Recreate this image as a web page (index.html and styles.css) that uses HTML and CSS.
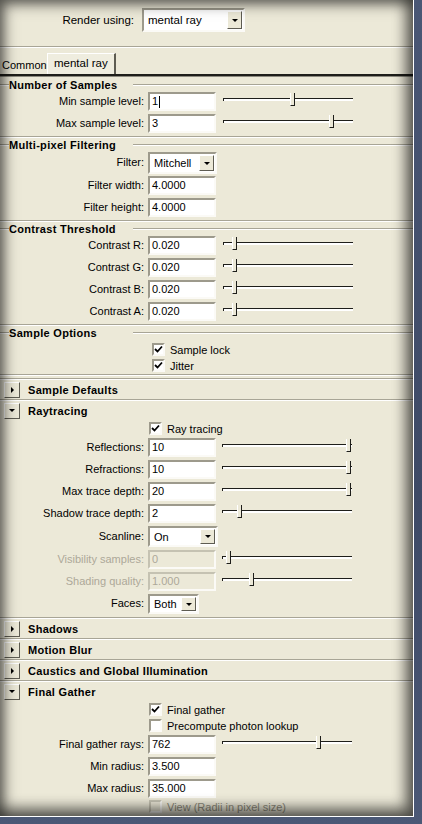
FILE: index.html
```html
<!DOCTYPE html>
<html>
<head>
<meta charset="utf-8">
<link rel="stylesheet" href="styles.css">
</head>
<body>
<div class="panel">
  <div class="top">
    <span class="top-lbl">Render using:</span>
    <div class="dd dd-render"><span class="val">mental ray</span><span class="btn"><i class="tri-d"></i></span></div>
  </div>
  <div class="hr"></div>
  <div class="tabs">
    <span class="tab">Common</span>
    <span class="tab active">mental ray</span>
  </div>
  <div class="tab-line"></div>

  <div class="frame first">
    <div class="ftitle"><span class="stub"></span><span class="ft">Number of Samples</span><span class="fline"></span></div>
    <div class="rows">
      <div class="row"><span class="lbl">Min sample level:</span><span class="field">1<i class="caret"></i></span><span class="slider"><span class="groove"></span><span class="thumb" style="left:67px"></span></span></div>
      <div class="row"><span class="lbl">Max sample level:</span><span class="field">3</span><span class="slider"><span class="groove"></span><span class="thumb" style="left:106px"></span></span></div>
    </div>
  </div>
  <div class="etched"></div>

  <div class="frame">
    <div class="ftitle"><span class="stub"></span><span class="ft">Multi-pixel Filtering</span><span class="fline"></span></div>
    <div class="rows">
      <div class="row row-dd"><span class="lbl">Filter:</span><div class="dd dd-filter"><span class="val">Mitchell</span><span class="btn"><i class="tri-d"></i></span></div></div>
      <div class="row"><span class="lbl">Filter width:</span><span class="field">4.0000</span></div>
      <div class="row"><span class="lbl">Filter height:</span><span class="field">4.0000</span></div>
    </div>
  </div>
  <div class="etched"></div>

  <div class="frame">
    <div class="ftitle"><span class="stub"></span><span class="ft">Contrast Threshold</span><span class="fline"></span></div>
    <div class="rows">
      <div class="row"><span class="lbl">Contrast R:</span><span class="field">0.020</span><span class="slider"><span class="groove"></span><span class="thumb" style="left:9px"></span></span></div>
      <div class="row"><span class="lbl">Contrast G:</span><span class="field">0.020</span><span class="slider"><span class="groove"></span><span class="thumb" style="left:9px"></span></span></div>
      <div class="row"><span class="lbl">Contrast B:</span><span class="field">0.020</span><span class="slider"><span class="groove"></span><span class="thumb" style="left:9px"></span></span></div>
      <div class="row"><span class="lbl">Contrast A:</span><span class="field">0.020</span><span class="slider"><span class="groove"></span><span class="thumb" style="left:9px"></span></span></div>
    </div>
  </div>
  <div class="etched"></div>

  <div class="frame chk-frame">
    <div class="ftitle"><span class="stub"></span><span class="ft">Sample Options</span><span class="fline"></span></div>
    <div class="chks">
      <div class="chk-row f"><span class="cb"><svg viewBox="0 0 9 9" width="9" height="9"><path d="M1 4 L3.5 6.5 L8 1.5" fill="none" stroke="#000" stroke-width="1.8"/></svg></span><span>Sample lock</span></div>
      <div class="chk-row f"><span class="cb"><svg viewBox="0 0 9 9" width="9" height="9"><path d="M1 4 L3.5 6.5 L8 1.5" fill="none" stroke="#000" stroke-width="1.8"/></svg></span><span>Jitter</span></div>
    </div>
  </div>
  <div class="etched"></div>

  <div class="section sd">
    <div class="etched"></div>
    <div class="sec-head"><span class="tri-btn"><i class="tri-r"></i></span><span class="sec-title">Sample Defaults</span></div>
  </div>

  <div class="section">
    <div class="etched"></div>
    <div class="sec-head"><span class="tri-btn"><i class="tri-d"></i></span><span class="sec-title">Raytracing</span></div>
    <div class="sec-body">
      <div class="chk-row"><span class="cb"><svg viewBox="0 0 9 9" width="9" height="9"><path d="M1 4 L3.5 6.5 L8 1.5" fill="none" stroke="#000" stroke-width="1.8"/></svg></span><span>Ray tracing</span></div>
      <div class="rows mt2">
        <div class="row"><span class="lbl">Reflections:</span><span class="field">10</span><span class="slider s2"><span class="groove"></span><span class="thumb" style="left:124px"></span></span></div>
        <div class="row"><span class="lbl">Refractions:</span><span class="field">10</span><span class="slider s2"><span class="groove"></span><span class="thumb" style="left:124px"></span></span></div>
        <div class="row"><span class="lbl">Max trace depth:</span><span class="field">20</span><span class="slider s2"><span class="groove"></span><span class="thumb" style="left:124px"></span></span></div>
        <div class="row"><span class="lbl">Shadow trace depth:</span><span class="field">2</span><span class="slider s2"><span class="groove"></span><span class="thumb" style="left:15px"></span></span></div>
        <div class="row row-dd"><span class="lbl">Scanline:</span><div class="dd dd-scan"><span class="val">On</span><span class="btn"><i class="tri-d"></i></span></div></div>
        <div class="row dis"><span class="lbl">Visibility samples:</span><span class="field">0</span><span class="slider s2"><span class="groove"></span><span class="thumb" style="left:4px"></span></span></div>
        <div class="row dis"><span class="lbl">Shading quality:</span><span class="field">1.000</span><span class="slider s2"><span class="groove"></span><span class="thumb" style="left:27px"></span></span></div>
        <div class="row row-dd2"><span class="lbl">Faces:</span><div class="dd dd-faces"><span class="val">Both</span><span class="btn"><i class="tri-d"></i></span></div></div>
      </div>
    </div>
  </div>

  <div class="section">
    <div class="etched"></div>
    <div class="sec-head"><span class="tri-btn"><i class="tri-r"></i></span><span class="sec-title">Shadows</span></div>
  </div>
  <div class="section">
    <div class="etched"></div>
    <div class="sec-head"><span class="tri-btn"><i class="tri-r"></i></span><span class="sec-title">Motion Blur</span></div>
  </div>
  <div class="section">
    <div class="etched"></div>
    <div class="sec-head"><span class="tri-btn"><i class="tri-r"></i></span><span class="sec-title">Caustics and Global Illumination</span></div>
  </div>

  <div class="section">
    <div class="etched"></div>
    <div class="sec-head"><span class="tri-btn"><i class="tri-d"></i></span><span class="sec-title">Final Gather</span></div>
    <div class="sec-body">
      <div class="chks fg">
        <div class="chk-row"><span class="cb"><svg viewBox="0 0 9 9" width="9" height="9"><path d="M1 4 L3.5 6.5 L8 1.5" fill="none" stroke="#000" stroke-width="1.8"/></svg></span><span>Final gather</span></div>
        <div class="chk-row"><span class="cb"></span><span>Precompute photon lookup</span></div>
      </div>
      <div class="rows mt2">
        <div class="row"><span class="lbl">Final gather rays:</span><span class="field">762</span><span class="slider s2"><span class="groove"></span><span class="thumb" style="left:94px"></span></span></div>
        <div class="row"><span class="lbl">Min radius:</span><span class="field">3.500</span></div>
        <div class="row"><span class="lbl">Max radius:</span><span class="field">35.000</span></div>
      </div>
      <div class="chk-row dis mt1"><span class="cb"></span><span>View (Radii in pixel size)</span></div>
    </div>
  </div>
</div>
</body>
</html>
```
FILE: styles.css
```css
html, body { margin: 0; padding: 0; }
body {
  width: 422px; height: 824px; overflow: hidden;
  background: linear-gradient(180deg, #4a5775 0%, #3e4a66 60%, #4b5876 100%);
  font-family: "Liberation Sans", Arial, sans-serif;
  font-size: 11px; color: #000;
}
.panel {
  position: relative;
  width: 413px; height: 816px;
  background: #ece9d8;
  border-right: 1px solid #fff;
  border-bottom: 1px solid #fff;
  overflow: hidden;
}
.panel::after {
  content: ""; position: absolute; inset: 0; pointer-events: none;
  box-shadow: inset 0 0 16px 3px rgba(0,0,0,.5), inset -7px -8px 14px rgba(0,0,0,.4), inset 4px 4px 10px rgba(0,0,0,.25);
}

/* top */
.top { display: flex; align-items: center; padding-top: 8px; height: 24px; }
.top-lbl { width: 134px; text-align: right; margin-right: 8px; font-size: 11.5px; }
.dd {
  display: flex; box-sizing: border-box; background: #fff;
  border: 2px solid; border-color: #9d9a8c #fbfaf6 #fbfaf6 #9d9a8c;
}
.dd .val { flex: 1; padding-left: 4px; display: flex; align-items: center; }
.dd .btn {
  width: 15px; margin: 1px; box-sizing: border-box; background: #ece9d8;
  border: 1px solid; border-color: #fff #5e5c52 #5e5c52 #fff;
  display: flex; align-items: center; justify-content: center;
}
.dd-render { width: 103px; height: 24px; font-size: 11.5px; }
.dd-filter { width: 69px; height: 22px; }
.dd-scan { width: 70px; height: 21px; }
.dd-faces { width: 51px; height: 20px; }
.tri-d { display: block; width: 0; height: 0; border-left: 3px solid transparent; border-right: 3px solid transparent; border-top: 3px solid #000; }
.tri-r { display: block; width: 0; height: 0; border-top: 3px solid transparent; border-bottom: 3px solid transparent; border-left: 3px solid #000; }

.hr { margin-top: 14px; height: 0; border-top: 1px solid #a8a596; border-bottom: 1px solid #fff; }

.tabs { display: flex; align-items: flex-end; height: 22px; margin-top: 4px; }
.tab { font-size: 11px; line-height: 18px; }
.tab:first-child { padding-left: 2px; width: 45px; padding-bottom: 0; }
.tab.active {
  padding: 0 6px; height: 21px; line-height: 18px; box-sizing: border-box;
  border-top: 1px solid #fff; border-left: 1px solid #fff; border-right: 2px solid #5e5c52;
  background: #efeddf; font-size: 11.5px;
}
.tab-line { height: 2px; background: #1e1e1a; border-bottom: 1px solid #8d8b80; }

/* frames */
.frame { padding-bottom: 3px; }
.frame.first { margin-top: 1px; }
.ftitle { display: flex; align-items: center; height: 14px; }
.stub { width: 9px; height: 0; border-top: 1px solid #a8a596; border-bottom: 1px solid #fff; }
.ft { width: 124px; font-weight: bold; white-space: nowrap; letter-spacing: .3px; }
.fline { flex: 1; height: 0; border-top: 1px solid #a8a596; border-bottom: 1px solid #fff; }
.etched { height: 0; border-top: 1px solid #a8a596; border-bottom: 1px solid #fff; }

.rows { display: flex; flex-direction: column; gap: 3px; }
.row { display: flex; align-items: flex-start; height: 19px; }
.row-dd { height: 21px; }
.row-dd2 { height: 20px; }
.lbl { width: 144px; text-align: right; margin-right: 4px; line-height: 19px; white-space: nowrap; }
.row-dd .lbl { line-height: 20px; }
.field {
  width: 68px; height: 19px; box-sizing: border-box; background: #fff;
  border: 2px solid; border-color: #9d9a8c #fbfaf6 #fbfaf6 #9d9a8c;
  padding-left: 2px; line-height: 15px; display: flex; align-items: center;
}
.caret { display: inline-block; width: 1px; height: 12px; background: #000; margin-left: 1px; }
.slider { position: relative; width: 130px; height: 14px; margin-left: 7px; margin-top: 1px; }
.slider.s2 { margin-left: 6px; }
.groove {
  position: absolute; left: 0; right: 0; top: 5px; height: 2px;
  border-top: 1px solid #1e1e1a; border-left: 1px solid #1e1e1a; background: #fff;
}
.thumb {
  position: absolute; top: 0; width: 3px; height: 12px;
  background: #ece9d8; border-left: 1px solid #fff; border-right: 1px solid #1e1e1a; border-bottom: 1px solid #1e1e1a;
}

.row.dis .lbl, .dis { color: #aca899; }
.row.dis .field { background: #ece9d8; color: #aca899; border-color: #c5c2b2 #fbfaf6 #fbfaf6 #c5c2b2; }

/* checkboxes */
.chks { display: flex; flex-direction: column; gap: 1px; margin-top: 2px; }
.chk-frame { padding-bottom: 1px; }
.chk-row { display: flex; align-items: center; height: 15px; padding-left: 149px; gap: 5px; }
.chk-row.f { padding-left: 152px; }
.cb {
  width: 13px; height: 13px; box-sizing: border-box; background: #fff;
  border: 2px solid; border-color: #9d9a8c #fbfaf6 #fbfaf6 #9d9a8c;
  display: flex; align-items: center; justify-content: center;
}
.chk-row.dis .cb { background: #ece9d8; border-color: #c5c2b2 #fbfaf6 #fbfaf6 #c5c2b2; }
.chk-row.dis { color: #8e8b7c; }

/* sections */
.section.sd { margin-top: 2px; }
.sec-head { display: flex; align-items: center; height: 19px; }
.tri-btn {
  width: 16px; height: 16px; margin-left: 4px; box-sizing: border-box;
  border: 1px solid; border-color: #fff #5e5c52 #5e5c52 #fff; background: #ece9d8;
  display: flex; align-items: center; justify-content: center;
}
.sec-title { margin-left: 8px; font-weight: bold; letter-spacing: .3px; }
.sec-body { padding-bottom: 3px; }
.sec-body > .chk-row:first-child { margin-top: 1px; }
.mt2 { margin-top: 2px; }
.mt1 { margin-top: 1px; }
.chks.fg { margin-top: 1px; }
```
